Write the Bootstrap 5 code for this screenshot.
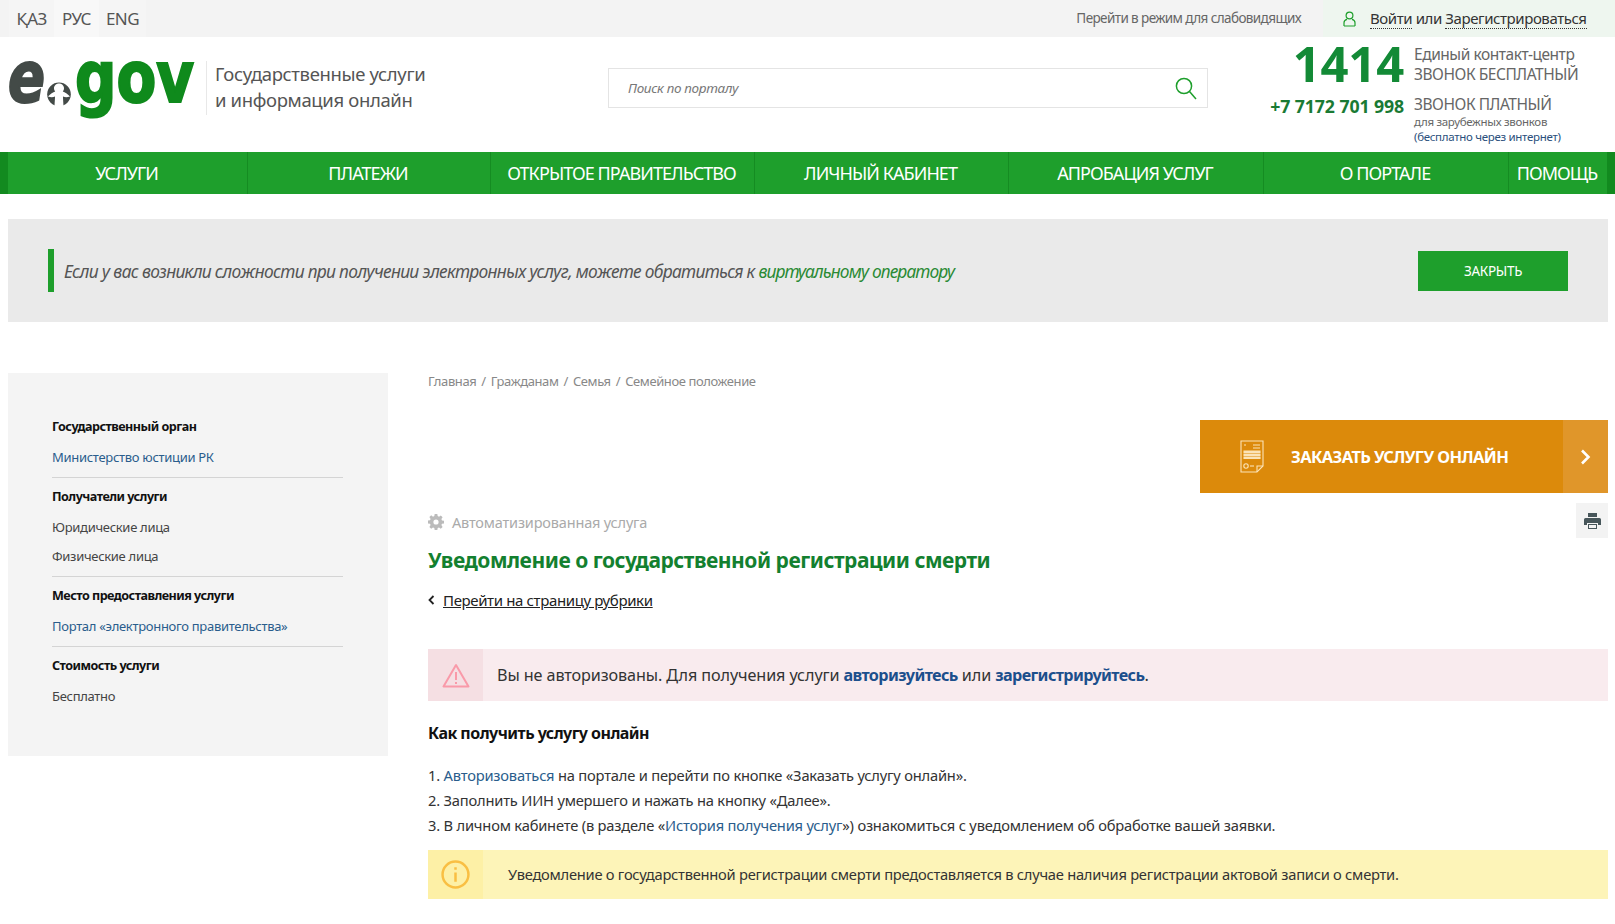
<!DOCTYPE html>
<html lang="ru">
<head>
<meta charset="utf-8">
<title>eGov</title>
<link href="https://cdn.jsdelivr.net/npm/bootstrap@5.3.0/dist/css/bootstrap.min.css" rel="stylesheet">
<style>
html,body{background:#fff}
body{font-family:"Noto Sans","Open Sans",sans-serif;color:#333;font-size:15px;overflow-x:hidden}
a{color:inherit}
.topstrip{height:37px;background:#f3f3f3}
.langs{padding-left:9px}
.lang-item{width:45px;height:37px;line-height:37px;font-size:17px;color:#555;text-align:center;letter-spacing:-.6px;text-decoration:none;background:#f5f5f5}
.lang-item.on{background:#f8f8f8}
.lang-item.wide{width:47px}
.low-vision{font-size:13.5px;color:#666;text-decoration:none;margin-right:22px;letter-spacing:-.6px}
.login-box{width:292px;height:37px;background:#eef6ef;padding-left:20px;font-size:15px;letter-spacing:-.42px;color:#333;gap:10px}
.login-box a{text-decoration:none;border-bottom:1px dotted #333;line-height:18px}
.head-row{height:115px;position:relative}
.brand-logo{margin-left:8px;margin-top:20px;width:190px;height:72px;flex:none;overflow:visible}
.logo-letter{font-family:"DejaVu Sans",sans-serif;font-weight:700}
.logo-e{stroke:#434a47;stroke-width:2.2px}
.logo-gov{stroke:#0f8a1c;stroke-width:2.2px}
.brand-sep{width:1px;height:54px;background:#e8e8e8;margin:24px 8px 0 8px}
.brand-text{font-size:18.5px;line-height:26px;color:#555;margin-top:24px;width:393px;letter-spacing:-.35px}
.search-box{width:600px;height:40px;border:1px solid #e4e4e4;margin-top:31px;padding:0 10px 0 19px}
.search-box input{border:0;outline:0;background:none;flex:1;font-size:13.5px;font-style:italic;color:#777;letter-spacing:-.35px;padding:0}
.search-box input::placeholder{color:#777;opacity:1}
.phones{margin-left:auto;width:393px;padding-top:1px}
.big-num{width:182px;text-align:right;font-size:49px;line-height:50px;font-weight:700;color:#138a36;letter-spacing:-.2px}
.sub-num{width:182px;text-align:right;font-size:17.7px;font-weight:700;color:#1a7a34;line-height:24px;letter-spacing:-.1px}
.phone-notes{margin-left:10px;font-size:15.5px;line-height:20px;color:#666;letter-spacing:-.45px}
.notes-top{margin-top:6px}
.row-paid{margin-top:6px}
.phone-mini{font-size:11.5px;line-height:15px;color:#666;letter-spacing:-.3px}
.phone-mini a{color:#2a4f7c;text-decoration:none}
.main-menu{display:grid;grid-template-columns:240px 243px 264px 254px 255px 245px 98px;height:42px;background:#1e9f2c;border-left:8px solid #128a1f;border-right:8px solid #128a1f;flex-wrap:nowrap}
.main-menu a{display:flex;align-items:center;justify-content:center;color:#fff;font-size:18px;letter-spacing:-.93px;text-decoration:none;border-right:1px solid #158c22;padding:0 2px 0 0;white-space:nowrap;height:42px}
.main-menu li:last-child a{border-right:0}
.help-banner{margin:25px 7px 0 8px;height:103px;background:#eaeaea;padding:0 40px}
.help-text{border-left:6px solid #1e9f2c;height:43px;padding-left:10px;font-style:italic;font-size:17.4px;color:#555;letter-spacing:-.7px;line-height:45px;white-space:nowrap}
.help-text a{color:#2a8a35;text-decoration:none;letter-spacing:-.9px}
.close-btn{width:150px;height:40px;border-radius:0;background:#1e9f2c;color:#fff;border:0;font-size:13.5px;letter-spacing:-.3px;padding:1px 0 0}
.content-wrap{margin:51px 7px 0 8px;gap:40px}
.side-panel{width:380px;height:383px;background:#f4f4f4;padding:44px 45px 0 44px;flex:none}
.side-title{font-size:12.6px;font-weight:700;color:#111;line-height:20px;letter-spacing:-.53px}
.side-val{font-size:13px;color:#444;line-height:20px;margin-top:10px;letter-spacing:-.3px}
.side-val a{color:#2a5d8c;text-decoration:none}
.side-val.tight{margin-top:9px}
.side-rule{margin:10px 0 9px;border:0;border-top:1px solid #d4d4d4;opacity:1}
.main-col{width:1180px;flex:none}
.crumbs{font-size:13px;color:#888;line-height:18px;letter-spacing:-.4px;gap:5px;margin:-1px 0 0;padding:0}
.order-btn{width:408px;height:73px;margin-top:30px;background:#dc8a0b;color:#fff;text-decoration:none}
.order-icon{margin-left:40px;margin-right:27px}
.order-text{font-size:16.5px;font-weight:700;letter-spacing:-.62px;flex:1;padding-top:2px}
.order-go{width:45px;height:73px;background:#e0962a}
.print-box{width:32px;height:35px;background:#f3f3f3;margin-top:10px}
.auto-row{margin-top:-26px;font-size:14.5px;color:#aaa;line-height:20px;gap:8px;letter-spacing:-.17px}
.svc-title{font-size:21px;font-weight:700;color:#13802f;margin:12px 0 0;line-height:32px;letter-spacing:-.48px}
.back-row{margin-top:13px;font-size:15px;line-height:22px;gap:8px;letter-spacing:-.37px;color:#222}
.back-row a{text-decoration:underline}
.alert-line{display:flex;align-items:center;border:0;border-radius:0;padding:0;margin:0}
.alert-icon{width:55px;align-self:stretch;display:flex;align-items:center;justify-content:center;flex:none}
.alert-red{height:52px;margin-top:38px;background:#f9ebee;font-size:16.2px;color:#333;letter-spacing:-.1px}
.alert-red .alert-icon{background:#f5dfe3}
.alert-red .alert-body{padding-left:14px}
.alert-red a{color:#1c4f8c;font-weight:700;text-decoration:none;letter-spacing:-.62px}
.how-title{font-size:16px;font-weight:700;color:#111;margin:20px 0 0;line-height:24px;letter-spacing:-.53px}
.steps{margin:18px 0 0;padding:0;list-style:none;font-size:14.7px;line-height:25px;color:#333;letter-spacing:-.2px}
.steps a{color:#2a5d8c;text-decoration:none}
.alert-yel{height:49px;margin-top:12px;background:#fdf4b8;font-size:14.7px;color:#333;letter-spacing:-.25px}
.alert-yel .alert-icon{background:#fdf0a6}
.alert-yel .alert-body{padding-left:25px}
</style>
</head>
<body>
<div class="topstrip d-flex align-items-center justify-content-between">
  <div class="langs d-flex">
    <a class="lang-item" href="#">ҚАЗ</a><a class="lang-item on" href="#">РУС</a><a class="lang-item wide" href="#">ENG</a>
  </div>
  <div class="d-flex align-items-center">
    <a class="low-vision" href="#">Перейти в режим для слабовидящих</a>
    <div class="login-box d-flex align-items-center">
      <svg width="13" height="16" viewBox="0 0 13 16" fill="none" stroke="#1e9f2c" stroke-width="1.2"><circle cx="6.5" cy="4.5" r="3.4"/><path d="M1 15v-3.2C1 9.8 2.8 8.6 4 8.3M12 15v-3.2c0-2-1.8-3.2-3-3.5M1 15h11"/></svg>
      <span class="ms-1"><a href="#">Войти</a> или <a href="#">Зарегистрироваться</a></span>
    </div>
  </div>
</div>

<header class="head-row d-flex">
  <svg class="brand-logo" viewBox="0 0 190 72" role="img" aria-label="egov">
    <text class="logo-letter logo-e" x="0" y="45" font-style="italic" font-size="72" fill="#434a47" textLength="37" lengthAdjust="spacingAndGlyphs">e</text>
    <circle cx="51" cy="37.300" r="11.800" fill="#434a47"/>
    <path d="M51 26.500C54 26.500 56 28.800 56 31.200C56 32.600 55.500 33.600 54.800 34.500C57 35 59.500 37 62 39.500C59 40.500 57 40.300 55 39.500C55 42 55.300 45 55.500 49L46.500 49C46.700 45 47 42 47 39.500C45 40.300 43 40.500 40 39.500C42.500 37 45 35 47.200 34.500C46.500 33.600 46 32.600 46 31.200C46 28.800 48 26.500 51 26.500Z" fill="#fff"/>
    <text class="logo-letter logo-gov" x="67" y="45" font-size="72" fill="#0f8a1c" textLength="119" lengthAdjust="spacingAndGlyphs">gov</text>
  </svg>
  <div class="brand-sep"></div>
  <div class="brand-text">Государственные услуги<br>и информация онлайн</div>
  <div class="search-box d-flex align-items-center">
    <input type="text" placeholder="Поиск по порталу" aria-label="Поиск">
    <svg width="22" height="23" viewBox="0 0 22 23" fill="none" stroke="#1e9f2c" stroke-width="1.5"><circle cx="9" cy="9" r="7.600"/><path d="M14.500 14.500l6.500 7.500"/></svg>
  </div>
  <div class="phones">
    <div class="d-flex align-items-start">
      <div class="big-num">1414</div>
      <div class="phone-notes notes-top">Единый контакт-центр<br>ЗВОНОК БЕСПЛАТНЫЙ</div>
    </div>
    <div class="d-flex align-items-start row-paid">
      <div class="sub-num">+7 7172 701 998</div>
      <div class="phone-notes">ЗВОНОК ПЛАТНЫЙ
        <div class="phone-mini">для зарубежных звонков<br><a href="#">(бесплатно через интернет)</a></div>
      </div>
    </div>
  </div>
</header>

<ul class="nav main-menu">
  <li class="nav-item"><a class="nav-link" href="#">УСЛУГИ</a></li>
  <li class="nav-item"><a class="nav-link" href="#">ПЛАТЕЖИ</a></li>
  <li class="nav-item"><a class="nav-link" href="#">ОТКРЫТОЕ ПРАВИТЕЛЬСТВО</a></li>
  <li class="nav-item"><a class="nav-link" href="#">ЛИЧНЫЙ КАБИНЕТ</a></li>
  <li class="nav-item"><a class="nav-link" href="#">АПРОБАЦИЯ УСЛУГ</a></li>
  <li class="nav-item"><a class="nav-link" href="#">О ПОРТАЛЕ</a></li>
  <li class="nav-item"><a class="nav-link" href="#">ПОМОЩЬ</a></li>
</ul>

<div class="help-banner d-flex align-items-center justify-content-between">
  <div class="help-text">Если у вас возникли сложности при получении электронных услуг, можете обратиться к <a href="#">виртуальному оператору</a></div>
  <button class="btn close-btn" type="button">ЗАКРЫТЬ</button>
</div>

<div class="content-wrap d-flex align-items-start">
  <aside class="side-panel">
    <div class="side-title">Государственный орган</div>
    <div class="side-val"><a href="#">Министерство юстиции РК</a></div>
    <hr class="side-rule">
    <div class="side-title">Получатели услуги</div>
    <div class="side-val">Юридические лица</div>
    <div class="side-val tight">Физические лица</div>
    <hr class="side-rule">
    <div class="side-title">Место предоставления услуги</div>
    <div class="side-val"><a href="#">Портал «электронного правительства»</a></div>
    <hr class="side-rule">
    <div class="side-title">Стоимость услуги</div>
    <div class="side-val">Бесплатно</div>
  </aside>

  <main class="main-col">
    <div class="crumbs d-flex"><span>Главная</span><span>/</span><span>Гражданам</span><span>/</span><span>Семья</span><span>/</span><span>Семейное положение</span></div>
    <div class="d-flex flex-column align-items-end">
      <a class="order-btn d-flex align-items-center" href="#">
        <svg class="order-icon" width="24" height="33" viewBox="0 0 24 33" fill="none" stroke="#fbe3b8" stroke-width="1.100"><path d="M1 1h22v25l-6 6H1z"/><path d="M17 32v-6h6"/><path d="M4 5h2M13 5h7M13 8h7"/><path d="M4 11h16v1.500H4zM4 14h16v1.500H4zM4 17h16v1.500H4z" fill="#fbe3b8"/><circle cx="6" cy="26" r="2.200"/><path d="M10 26h4"/></svg>
        <span class="order-text">ЗАКАЗАТЬ УСЛУГУ ОНЛАЙН</span>
        <span class="order-go d-flex align-items-center justify-content-center">
          <svg width="11" height="16" viewBox="0 0 11 16" fill="none" stroke="#fff" stroke-width="2.600"><path d="M2 1.500L8.500 8 2 14.500"/></svg>
        </span>
      </a>
      <div class="print-box d-flex align-items-center justify-content-center">
        <svg width="17" height="16" viewBox="0 0 17 16"><path d="M4 0h9v4H4z" fill="#47565a"/><path d="M1.500 5h14A1.500 1.500 0 0 1 17 6.500V12h-3v-2H3v2H0V6.500A1.500 1.500 0 0 1 1.500 5z" fill="#47565a"/><path d="M4 11h9v5H4z" fill="#47565a"/><path d="M5 12h7v3H5z" fill="#f3f3f3"/></svg>
      </div>
    </div>
    <div class="auto-row d-flex align-items-center">
      <svg width="16" height="16" viewBox="0 0 16 16"><path fill="#bbb" fill-rule="evenodd" d="M6.700 0h2.600l.4 2.100 1.300.6 1.800-1.200 1.800 1.800-1.200 1.800.6 1.300 2 .4v2.600l-2 .4-.6 1.300 1.200 1.800-1.800 1.800-1.800-1.200-1.300.6-.4 2H6.700l-.4-2-1.300-.6-1.800 1.200-1.800-1.800 1.200-1.800-.6-1.300-2-.4V6.600l2-.4.6-1.300-1.200-1.800 1.800-1.800L5 2.700l1.300-.6zM8 5.400a2.600 2.600 0 1 0 0 5.200 2.600 2.600 0 0 0 0-5.200z"/></svg>
      <span>Автоматизированная услуга</span>
    </div>
    <h1 class="svc-title">Уведомление о государственной регистрации смерти</h1>
    <div class="back-row d-flex align-items-center">
      <svg width="7" height="10" viewBox="0 0 7 10" fill="none" stroke="#222" stroke-width="1.800"><path d="M5.500 1L1.500 5l4 4"/></svg>
      <a href="#">Перейти на страницу рубрики</a>
    </div>

    <div class="alert alert-line alert-red" role="alert">
      <div class="alert-icon">
        <svg width="28" height="25" viewBox="0 0 28 25" fill="none" stroke="#f99aa9" stroke-width="2" stroke-linejoin="round"><path d="M14 2L1.500 23.500h25z"/><path d="M14 9v8M14 19v2"/></svg>
      </div>
      <div class="alert-body">Вы не авторизованы. Для получения услуги <a href="#">авторизуйтесь</a> или <a href="#">зарегистрируйтесь</a>.</div>
    </div>

    <h2 class="how-title">Как получить услугу онлайн</h2>
    <ol class="steps">
      <li>1. <a href="#">Авторизоваться</a> на портале и перейти по кнопке «Заказать услугу онлайн».</li>
      <li>2. Заполнить ИИН умершего и нажать на кнопку «Далее».</li>
      <li>3. В личном кабинете (в разделе «<a href="#">История получения услуг</a>») ознакомиться с уведомлением об обработке вашей заявки.</li>
    </ol>

    <div class="alert alert-line alert-yel" role="alert">
      <div class="alert-icon">
        <svg width="29" height="29" viewBox="0 0 28 28" fill="none" stroke="#f9bf43" stroke-width="2.400"><circle cx="14" cy="14" r="12.500"/><path d="M14 12v9M14 7v2.500"/></svg>
      </div>
      <div class="alert-body">Уведомление о государственной регистрации смерти предоставляется в случае наличия регистрации актовой записи о смерти.</div>
    </div>
  </main>
</div>
<script src="https://cdn.jsdelivr.net/npm/bootstrap@5.3.0/dist/js/bootstrap.bundle.min.js"></script>
</body>
</html>
